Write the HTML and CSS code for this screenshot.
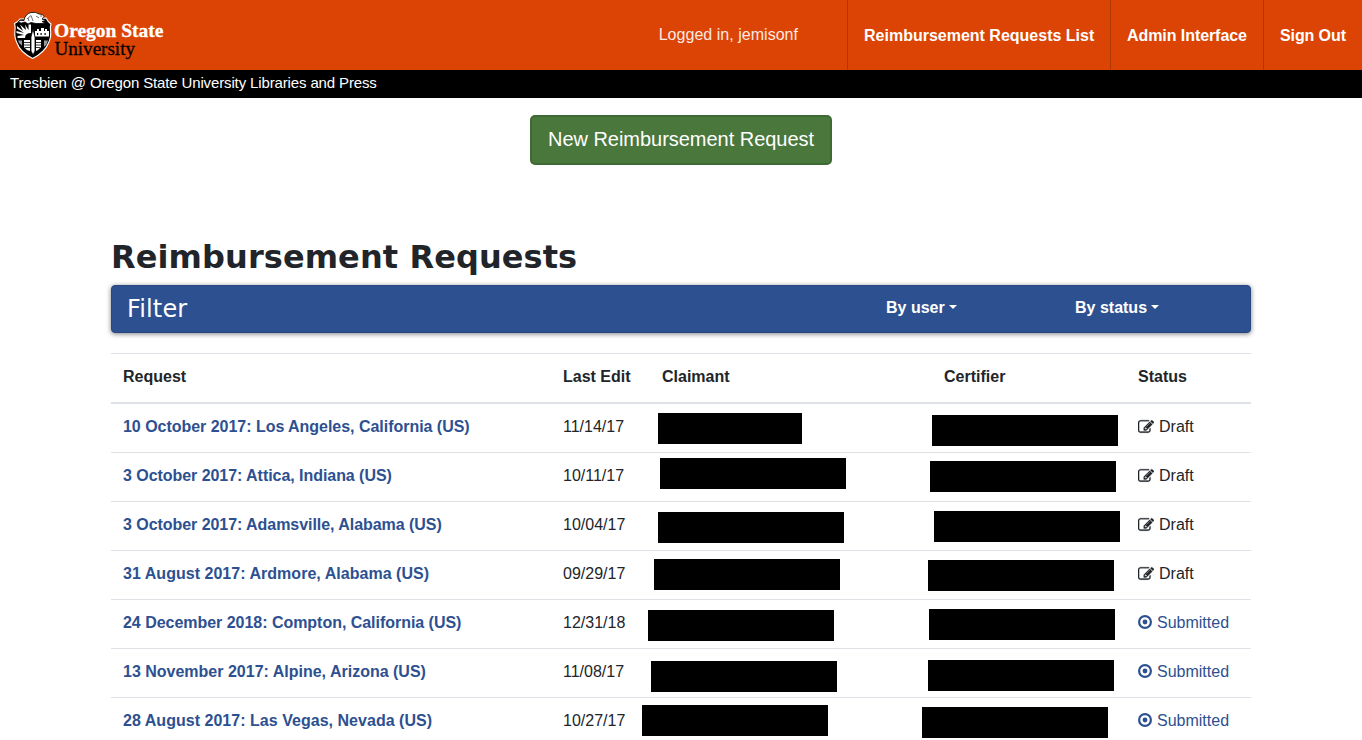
FILE: index.html
```html
<!DOCTYPE html>
<html lang="en">
<head>
<meta charset="utf-8">
<title>Reimbursement Requests</title>
<link rel="stylesheet" href="styles.css">
</head>
<body>
<svg class="defs" width="0" height="0">
  <symbol id="edit" viewBox="0 0 1792 1792"><path d="M888 1184l116-116-152-152-116 116v56h96v96h56zm440-720q-16-16-33 1l-350 350q-17 17-1 33t33-1l350-350q17-17 1-33zm80 594v190q0 119-84.500 203.500t-203.500 84.500h-832q-119 0-203.500-84.500t-84.500-203.500v-832q0-119 84.500-203.500t203.500-84.500h832q63 0 117 25 15 7 18 23 3 17-9 29l-49 49q-14 14-32 8-23-6-45-6h-832q-66 0-113 47t-47 113v832q0 66 47 113t113 47h832q66 0 113-47t47-113v-126q0-13 9-22l64-64q15-15 35-7t20 29zm-96-738l288 288-672 672h-288v-288zm444 132l-92 92-288-288 92-92q28-28 68-28t68 28l152 152q28 28 28 68t-28 68z"/></symbol>
  <symbol id="dot" viewBox="0 0 14 14"><circle cx="7" cy="7" r="5.900" fill="none" stroke="currentColor" stroke-width="2.200"/><circle cx="7" cy="7" r="2.400"/></symbol>
</svg>
<header class="header">
  <svg class="logo" width="156" height="54" viewBox="10 8 156 54" role="img">
    <path d="M14.500 23.500Q18 22 20 19L46 18Q48 22 51 24Q50 27 50.500 30Q51.500 37 48.500 43Q45 52 32.700 58.500Q20 52 17 43Q14 37 15 30Q15.500 27 14.500 23.500Z" fill="#000" stroke="#fff" stroke-width="1.100"/>
    <path d="M17 26L23 31L20 24.500L26 30L25 24.500L28.500 30V24.500H31V38H17.500V36L24 35L16.500 33V31L24 33L17 28.500Z" fill="#fff"/>
    <path d="M25 38Q25 33 31 33V38Z" fill="#000"/>
    <path d="M35 36.500V31H37V29H39V31H41V28H44V31H45V29H47V31H49V36.500Z" fill="#fff"/>
    <path d="M37 33h1.200v2H37zM40.500 33h1.200v2h-1.200zM44.500 33h1.200v2h-1.200z" fill="#000"/>
    <path d="M24 40H30V51L27 50L24 47Z M36 40H41V47L38 50L36 51Z" fill="#fff"/>
    <path d="M24 42.500h6M24 45h6M25 47.500h5M36 42.500h5M36 45h5M36 47.500h4" stroke="#000" stroke-width=".8" fill="none"/>
    <path d="M18 40.500h4v5l-2.500-2zM44 40.500h4l-1.500 4L44 47z" fill="#999"/>
    <path d="M33 29L35 37V51L33 55L31 51V37Z" fill="#fff" stroke="#000" stroke-width=".8"/>
    <path d="M18 22Q20 19.500 24 20.500Q25 14 31 12.500Q36 11.500 39 14Q43 13.500 44 16.500L42 19L46 20.500L42 21.500L46 23.500H36L31 22.500L28 24L25 22Q21 24 18 22Z" fill="#fff" stroke="#000" stroke-width=".8"/>
    <path d="M27 19L31 15.500L33 21M36 16L39 18M40 16H42M29 21L28 18" fill="none" stroke="#333" stroke-width=".7"/>
    <text class="logo-oregon" x="54" y="36.500" textLength="109.500" lengthAdjust="spacingAndGlyphs">Oregon State</text>
    <text class="logo-university" x="54.500" y="54.500" textLength="80.500" lengthAdjust="spacingAndGlyphs">University</text>
  </svg>
  <nav class="nav">
    <span class="user">Logged in, jemisonf</span>
    <a class="nav-list">Reimbursement Requests List</a>
    <a class="nav-admin">Admin Interface</a>
    <a class="nav-out">Sign Out</a>
  </nav>
</header>
<div class="subheader">Tresbien @ Oregon State University Libraries and Press</div>
<main class="container">
  <a class="new-button">New Reimbursement Request</a>
  <h1>Reimbursement Requests</h1>
  <div class="filter">
    <span class="filter-title">Filter</span>
    <a class="dropdown by-user">By user</a>
    <a class="dropdown">By status</a>
  </div>
  <div class="table">
    <div class="row head"><span>Request</span><span>Last Edit</span><span>Claimant</span><span>Certifier</span><span>Status</span></div>
    <div class="row r1"><a>10 October 2017: Los Angeles, California (US)</a><span>11/14/17</span><span class="claimant"><i></i></span><span class="certifier"><i></i></span><span class="status"><svg><use href="#edit"/></svg>Draft</span></div>
    <div class="row r2"><a>3 October 2017: Attica, Indiana (US)</a><span>10/11/17</span><span class="claimant"><i></i></span><span class="certifier"><i></i></span><span class="status"><svg><use href="#edit"/></svg>Draft</span></div>
    <div class="row r3"><a>3 October 2017: Adamsville, Alabama (US)</a><span>10/04/17</span><span class="claimant"><i></i></span><span class="certifier"><i></i></span><span class="status"><svg><use href="#edit"/></svg>Draft</span></div>
    <div class="row r4"><a>31 August 2017: Ardmore, Alabama (US)</a><span>09/29/17</span><span class="claimant"><i></i></span><span class="certifier"><i></i></span><span class="status"><svg><use href="#edit"/></svg>Draft</span></div>
    <div class="row r5"><a>24 December 2018: Compton, California (US)</a><span>12/31/18</span><span class="claimant"><i></i></span><span class="certifier"><i></i></span><span class="status submitted"><svg><use href="#dot"/></svg>Submitted</span></div>
    <div class="row r6"><a>13 November 2017: Alpine, Arizona (US)</a><span>11/08/17</span><span class="claimant"><i></i></span><span class="certifier"><i></i></span><span class="status submitted"><svg><use href="#dot"/></svg>Submitted</span></div>
    <div class="row r7"><a>28 August 2017: Las Vegas, Nevada (US)</a><span>10/27/17</span><span class="claimant"><i></i></span><span class="certifier"><i></i></span><span class="status submitted"><svg><use href="#dot"/></svg>Submitted</span></div>
  </div>
</main>
</body>
</html>
```

FILE: styles.css
```css
* { box-sizing: border-box; }
body {
  margin: 0;
  height: 740px;
  overflow: hidden;
  background: #fff;
  color: #212529;
  font: 16px/24px "Liberation Sans", Arial, sans-serif;
}
.defs { position: absolute; }
.header {
  display: flex;
  justify-content: space-between;
  height: 70px;
  padding-left: 10px;
  background: #dc4405;
}
.logo { margin-top: 8px; }
.logo text { font-family: "Liberation Serif", serif; font-size: 19.5px; }
.logo .logo-oregon { font-weight: bold; fill: #fff; stroke: #fff; stroke-width: .3px; }
.logo .logo-university { fill: #000; stroke: #000; stroke-width: .3px; }
.nav { display: flex; color: #fff; line-height: 72px; white-space: nowrap; }
.nav .user { padding-right: 49px; line-height: 70px; color: #fbe9e2; letter-spacing: .03px; }
.nav a { height: 70px; padding-left: 16px; border-left: 1px solid #b03604; font-weight: bold; }
.nav-list { width: 263px; }
.nav-admin { width: 153px; letter-spacing: -.07px; }
.nav-out { width: 99px; letter-spacing: -.1px; }
.subheader {
  height: 28px;
  padding-left: 10px;
  background: #000;
  color: #fff;
  font-size: 15px;
  line-height: 26px;
  letter-spacing: -.135px;
}
.container { display: flex; flex-direction: column; width: 1140px; margin: 0 auto; }
.new-button {
  align-self: center;
  width: 302px;
  height: 50px;
  margin-top: 17px;
  border: 2px solid #3f6a34;
  border-radius: 5px;
  background: #4a773c;
  color: #fff;
  font-size: 20px;
  line-height: 45px;
  letter-spacing: -.03px;
  text-align: center;
}
h1 {
  margin: 72px 0 8px;
  font: bold 32px/40px "DejaVu Sans", sans-serif;
  letter-spacing: .09px;
}
.filter {
  display: flex;
  height: 48px;
  padding-left: 15px;
  border: 1px solid #284780;
  border-radius: 4px;
  background: #2d5090;
  box-shadow: 0 1px 5px rgba(0, 0, 0, .5);
  color: #fff;
}
.filter-title { width: 759px; font: 24px/46px "DejaVu Sans", sans-serif; letter-spacing: .15px; }
.dropdown { font-weight: bold; line-height: 44px; }
.by-user { width: 189px; }
.dropdown::after {
  display: inline-block;
  margin-left: 4px;
  border: 4.8px solid transparent;
  border-top-color: #fff;
  border-bottom: 0;
  vertical-align: 4px;
  content: "";
}
.table { margin-top: 20px; border-top: 1px solid #dee2e6; }
.row {
  display: grid;
  grid-template-columns: 440px 99px 282px 194px 125px;
  height: 49px;
  border-bottom: 1px solid #dee2e6;
}
.row > * { position: relative; padding: 11px 12px; white-space: nowrap; }
.head { height: 50px; border-bottom-width: 2px; font-weight: bold; }
.row a { color: #2d5090; font-weight: bold; }
.r1 a, .r5 a { letter-spacing: -.03px; }
.r2 a, .r3 a { letter-spacing: -.05px; }
.r4 a, .r7 a { letter-spacing: .03px; }
.row .status { display: flex; }
.status svg { width: 16px; height: 16px; margin: 4px 5px 0 0; fill: currentColor; stroke: currentColor; stroke-width: 30; }
.row .submitted { color: #2d5090; }
.submitted svg { width: 14px; height: 14px; margin-top: 4px; stroke: none; }
/* Redaction bars are placed freely over the names */
.row i { position: absolute; z-index: 1; width: 186px; height: 31px; background: #000; }
.r1 .claimant i { left: 8px; top: 9px; width: 144px; }
.r1 .certifier i { left: 0; top: 11px; }
.r2 .claimant i { left: 10px; top: 5px; }
.r2 .certifier i { left: -2px; top: 8px; }
.r3 .claimant i { left: 8px; top: 10px; }
.r3 .certifier i { left: 2px; top: 9px; }
.r4 .claimant i { left: 4px; top: 8px; }
.r4 .certifier i { left: -4px; top: 9px; }
.r5 .claimant i { left: -2px; top: 10px; }
.r5 .certifier i { left: -3px; top: 9px; }
.r6 .claimant i { left: 1px; top: 12px; }
.r6 .certifier i { left: -4px; top: 11px; }
.r7 .claimant i { left: -8px; top: 7px; }
.r7 .certifier i { left: -10px; top: 9px; }
```
